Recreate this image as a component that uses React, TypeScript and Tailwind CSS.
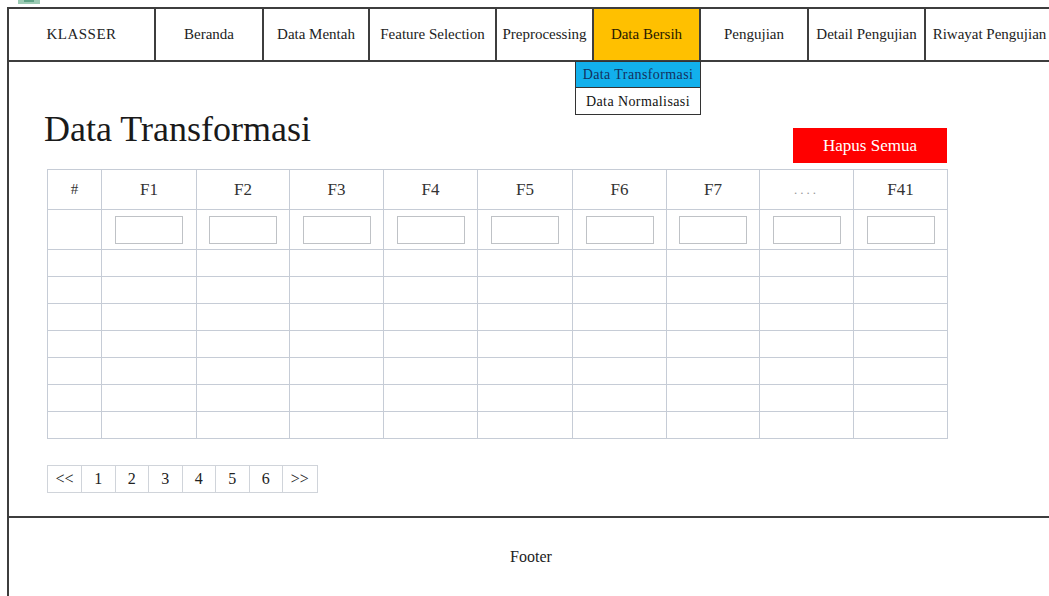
import React from "react";

const columns = ["F1", "F2", "F3", "F4", "F5", "F6", "F7", "....", "F41"];
const bodyRows = [0, 1, 2, 3, 4, 5, 6];
const pages = ["<<", "1", "2", "3", "4", "5", "6", ">>"];

function NavCell({ label, className }: { label: string; className: string }) {
  return (
    <div className={`flex h-full items-center justify-center border-r-2 border-[#3d3d3d] text-[15px] text-[#222] ${className}`}>
      {label}
    </div>
  );
}

export default function App() {
  return (
    <div className="h-[596px] w-full overflow-hidden bg-white font-['Liberation_Serif','Times_New_Roman',serif]">
      {/* browser strip above the page */}
      <div className="relative h-[7px] w-full">
        <div className="absolute left-[18px] top-0 h-[4px] w-[22px] bg-[#9ccbb4]" />
        <div className="absolute left-[24px] top-0 h-[2px] w-[10px] bg-[#5fa587]" />
      </div>

      <div className="ml-[7px] flex w-[1046px] flex-col border-l-2 border-t-2 border-[#3d3d3d]">
        {/* navigation bar */}
        <nav className="flex h-[53px] border-b-2 border-[#3d3d3d]">
          <NavCell label="KLASSER" className="w-[147px] tracking-[0.5px]" />
          <NavCell label="Beranda" className="w-[108px]" />
          <NavCell label="Data Mentah" className="w-[106px]" />
          <NavCell label="Feature Selection" className="w-[127px]" />
          <NavCell label="Preprocessing" className="w-[97px]" />
          <div className="relative flex h-full w-[107px] items-center justify-center border-r-2 border-[#3d3d3d] bg-[#ffc000] text-[15px] text-[#2a1a00]">
            Data Bersih
            <div className="absolute left-[-19px] top-[52px] z-10 w-[126px] border border-[#333] bg-white text-[14px] tracking-[0.4px]">
              <div className="flex h-[26px] items-center justify-center border-b border-[#333] bg-[#12b0ec] text-[#14305e]">
                Data Transformasi
              </div>
              <div className="flex h-[26px] items-center justify-center text-[#111]">Data Normalisasi</div>
            </div>
          </div>
          <NavCell label="Pengujian" className="w-[108px]" />
          <NavCell label="Detail Pengujian" className="w-[117px]" />
          <div className="flex h-full flex-1 items-center justify-center text-[15px] text-[#222]">Riwayat Pengujian</div>
        </nav>

        {/* page content */}
        <main className="flex h-[456px] flex-col border-b-2 border-[#3d3d3d] pl-[38px] pt-[49px]">
          <div className="flex w-[900px] items-start justify-between">
            <h1 className="-ml-[3px] text-[36px] leading-none text-[#1a1a1a]">Data Transformasi</h1>
            <button className="mt-[17px] flex h-[35px] w-[154px] items-center justify-center bg-[#ff0000] text-[17px] text-white">
              Hapus Semua
            </button>
          </div>

          <table className="mt-[6px] w-[900px] table-fixed border-collapse text-[17px] text-[#333]">
            <colgroup>
              <col className="w-[54px]" />
              <col className="w-[95px]" />
              <col className="w-[93px]" />
              <col className="w-[94px]" />
              <col className="w-[94px]" />
              <col className="w-[95px]" />
              <col className="w-[94px]" />
              <col className="w-[93px]" />
              <col className="w-[94px]" />
              <col className="w-[94px]" />
            </colgroup>
            <thead>
              <tr className="h-[40px]">
                <th className="border border-[#c6ccd6] p-0 text-[15px] font-normal">#</th>
                {columns.map((c) => (
                  <th
                    key={c}
                    className={`border border-[#c6ccd6] p-0 font-normal ${c === "...." ? "text-[13px] tracking-[3px] text-[#999]" : ""}`}
                  >
                    {c}
                  </th>
                ))}
              </tr>
            </thead>
            <tbody>
              <tr className="h-[40px]">
                <td className="border border-[#c6ccd6] p-0" />
                {columns.map((c) => (
                  <td key={c} className="border border-[#c6ccd6] p-0">
                    <div className="mx-auto h-[28px] w-[68px] border border-[#bfc2c6] bg-white" />
                  </td>
                ))}
              </tr>
              {bodyRows.map((r) => (
                <tr key={r} className="h-[27px]">
                  <td className="border border-[#c6ccd6] p-0" />
                  {columns.map((c) => (
                    <td key={c} className="border border-[#c6ccd6] p-0" />
                  ))}
                </tr>
              ))}
            </tbody>
          </table>

          <div className="mt-[26px] flex h-[28px] w-fit border border-[#d0d4da] text-[16px] text-[#222]">
            {pages.map((p, i) => (
              <div
                key={p}
                className={`flex h-full items-center justify-center ${i === 0 ? "w-[34px]" : "w-[33.5px]"} ${
                  i < pages.length - 1 ? "border-r border-[#d0d4da]" : ""
                }`}
              >
                {p}
              </div>
            ))}
          </div>
        </main>

        {/* footer */}
        <footer className="flex h-[78px] items-center justify-center text-[16px] text-[#222]">Footer</footer>
      </div>
    </div>
  );
}
